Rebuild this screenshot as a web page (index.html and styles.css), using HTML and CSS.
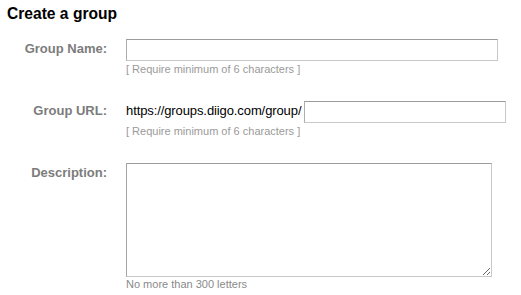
FILE: index.html
```html
<!DOCTYPE html>
<html lang="en">
<head>
    <meta charset="UTF-8">
    <meta name="viewport" content="width=device-width, initial-scale=1.0">
    <title>Create a group</title>
    <link rel="stylesheet" href="styles.css">
</head>
<body>
    <h1>Create a group</h1>
    <form class="group-form">
        <div class="form-row">
            <label for="groupName">Group Name:</label>
            <div class="field">
                <input type="text" id="groupName" class="text-input name-input">
                <div class="hint">[ Require minimum of 6 characters ]</div>
            </div>
        </div>
        <div class="form-row">
            <label for="groupUrl">Group URL:</label>
            <div class="field">
                <div class="url-line">
                    <span class="url-prefix">https://groups.diigo.com/group/</span>
                    <input type="text" id="groupUrl" class="text-input url-input">
                </div>
                <div class="hint">[ Require minimum of 6 characters ]</div>
            </div>
        </div>
        <div class="form-row last-row">
            <label for="groupDesc">Description:</label>
            <div class="field">
                <textarea id="groupDesc" class="desc-input"></textarea>
                <div class="note">No more than 300 letters</div>
            </div>
        </div>
    </form>
</body>
</html>
```

FILE: styles.css
```css
body {
    font-family: 'Liberation Sans', Arial, sans-serif;
    font-size: 13px;
    color: #000;
    background-color: #fff;
    margin: 0;
    padding: 0 7px;
}
h1 {
    font-size: 15.6px;
    line-height: 20px;
    font-weight: bold;
    margin: 0;
    padding-top: 4px;
}
.group-form {
    margin-top: 15px;
}
.form-row {
    display: grid;
    grid-template-columns: 100px 1fr;
    column-gap: 19px;
    margin-bottom: 25px;
}
.last-row {
    margin-bottom: 0;
}
.form-row label {
    text-align: right;
    font-weight: bold;
    color: #7c7c7c;
    line-height: 16px;
    padding-top: 2px;
}
.field {
    display: flex;
    flex-direction: column;
    align-items: flex-start;
}
.text-input {
    box-sizing: border-box;
    height: 22px;
    margin: 0;
    padding: 2px 4px;
    font: 13px 'Liberation Sans', Arial, sans-serif;
    border: 1px solid #c8c8c8;
    border-top-color: #9c9c9c;
    border-left-color: #adadad;
    border-radius: 0;
    outline: none;
}
.name-input {
    width: 372px;
}
.url-line {
    display: flex;
    align-items: flex-start;
    gap: 3px;
    height: 22px;
}
.url-prefix {
    line-height: 16px;
    padding-top: 2px;
    letter-spacing: -0.1px;
}
.url-input {
    width: 202px;
}
.hint {
    font-size: 11px;
    line-height: 14px;
    color: #9a9a9a;
    margin-top: 1px;
}
.desc-input {
    display: block;
    box-sizing: border-box;
    width: 366px;
    height: 114px;
    margin: 0;
    padding: 2px;
    font: 13px 'Liberation Sans', Arial, sans-serif;
    border: 1px solid #c8c8c8;
    border-top-color: #9c9c9c;
    border-left-color: #a4a4a4;
    border-radius: 0;
    outline: none;
}
.note {
    font-size: 11px;
    line-height: 14px;
    color: #8a8a8a;
}
```
